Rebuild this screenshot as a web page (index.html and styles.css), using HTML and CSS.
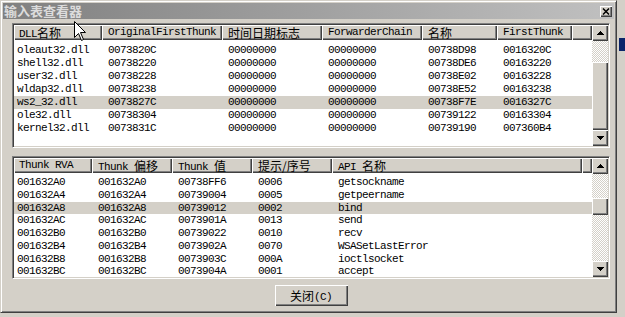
FILE: index.html
```html
<!DOCTYPE html>
<html lang="zh-CN">
<head>
    <meta charset="UTF-8">
    <title>输入表查看器</title>
    <link rel="stylesheet" href="styles.css">
</head>
<body>
    <div class="window">
        <div class="titlebar">
            <span class="title">输入表查看器</span>
            <button class="close-btn"><svg width="8" height="7" viewBox="0 0 8 7"><path d="M1 0.5L7 6.5M7 0.5L1 6.5" stroke="#000" stroke-width="1.5"/></svg></button>
        </div>
        <div class="content">
            <div class="listview dll-list">
                <div class="lv-main">
                    <div class="lv-head">
                        <div class="hcell first">DLL<span class="zh">名称</span></div>
                        <div class="hcell">OriginalFirstThunk</div>
                        <div class="hcell"><span class="zh">时间日期标志</span></div>
                        <div class="hcell">ForwarderChain</div>
                        <div class="hcell"><span class="zh">名称</span></div>
                        <div class="hcell">FirstThunk</div>
                        <div class="hcell"></div>
                    </div>
                    <div class="lv-rows">
                        <div class="row"><span>oleaut32.dll</span><span>0073820C</span><span>00000000</span><span>00000000</span><span>00738D98</span><span>0016320C</span></div>
                        <div class="row"><span>shell32.dll</span><span>00738220</span><span>00000000</span><span>00000000</span><span>00738DE6</span><span>00163220</span></div>
                        <div class="row"><span>user32.dll</span><span>00738228</span><span>00000000</span><span>00000000</span><span>00738E02</span><span>00163228</span></div>
                        <div class="row"><span>wldap32.dll</span><span>00738238</span><span>00000000</span><span>00000000</span><span>00738E52</span><span>00163238</span></div>
                        <div class="row sel"><span>ws2_32.dll</span><span>0073827C</span><span>00000000</span><span>00000000</span><span>00738F7E</span><span>0016327C</span></div>
                        <div class="row"><span>ole32.dll</span><span>00738304</span><span>00000000</span><span>00000000</span><span>00739122</span><span>00163304</span></div>
                        <div class="row"><span>kernel32.dll</span><span>0073831C</span><span>00000000</span><span>00000000</span><span>00739190</span><span>007360B4</span></div>
                    </div>
                </div>
                <div class="vscroll">
                    <div class="sb-btn"><svg width="7" height="4" viewBox="0 0 7 4" shape-rendering="crispEdges"><polygon points="3.5,0 7,4 0,4" fill="#000"/></svg></div>
                    <div class="sb-track" style="height: 21px"></div>
                    <div class="sb-thumb grow"></div>
                    <div class="sb-btn"><svg width="7" height="4" viewBox="0 0 7 4" shape-rendering="crispEdges"><polygon points="0,0 7,0 3.5,4" fill="#000"/></svg></div>
                </div>
            </div>

            <div class="listview api-list">
                <div class="lv-main">
                    <div class="lv-head">
                        <div class="hcell first">Thunk RVA</div>
                        <div class="hcell">Thunk <span class="zh">偏移</span></div>
                        <div class="hcell">Thunk <span class="zh">值</span></div>
                        <div class="hcell"><span class="zh">提示/序号</span></div>
                        <div class="hcell">API <span class="zh">名称</span></div>
                        <div class="hcell"></div>
                    </div>
                    <div class="lv-rows">
                        <div class="row"><span>001632A0</span><span>001632A0</span><span>00738FF6</span><span>0006</span><span>getsockname</span></div>
                        <div class="row"><span>001632A4</span><span>001632A4</span><span>00739004</span><span>0005</span><span>getpeername</span></div>
                        <div class="row sel"><span>001632A8</span><span>001632A8</span><span>00739012</span><span>0002</span><span>bind</span></div>
                        <div class="row"><span>001632AC</span><span>001632AC</span><span>0073901A</span><span>0013</span><span>send</span></div>
                        <div class="row"><span>001632B0</span><span>001632B0</span><span>00739022</span><span>0010</span><span>recv</span></div>
                        <div class="row"><span>001632B4</span><span>001632B4</span><span>0073902A</span><span>0070</span><span>WSASetLastError</span></div>
                        <div class="row"><span>001632B8</span><span>001632B8</span><span>0073903C</span><span>000A</span><span>ioctlsocket</span></div>
                        <div class="row"><span>001632BC</span><span>001632BC</span><span>0073904A</span><span>0001</span><span>accept</span></div>
                    </div>
                </div>
                <div class="vscroll">
                    <div class="sb-btn"><svg width="7" height="4" viewBox="0 0 7 4" shape-rendering="crispEdges"><polygon points="3.5,0 7,4 0,4" fill="#000"/></svg></div>
                    <div class="sb-track" style="height: 24px"></div>
                    <div class="sb-thumb" style="height: 17px"></div>
                    <div class="sb-track grow"></div>
                    <div class="sb-btn"><svg width="7" height="4" viewBox="0 0 7 4" shape-rendering="crispEdges"><polygon points="0,0 7,0 3.5,4" fill="#000"/></svg></div>
                </div>
            </div>

            <div class="footer">
                <button class="btn"><span class="zh">关闭</span>(C)</button>
            </div>
        </div>
    </div>

    <div class="desk-item"></div>

    <svg class="cursor" width="13" height="20" viewBox="0 0 13 20">
        <path d="M0.5 0.5L0.5 16.5L4.5 12.5L7.5 19.5L9.5 18.5L6.5 11.5L11.5 11.5Z" fill="#fff" stroke="#000" stroke-width="1"/>
    </svg>
</body>
</html>
```

FILE: styles.css
```css
body {
    margin: 0;
    height: 317px;
    overflow: hidden;
    position: relative;
    background-color: #d4d0c8;
    font-family: "Liberation Mono", "Noto Sans CJK SC", monospace;
    font-size: 11px;
    color: #000;
}

.zh {
    font-family: "Noto Sans CJK SC", sans-serif;
    font-size: 12px;
    letter-spacing: 0;
    vertical-align: -1px;
}

.window {
    width: 611px;
    height: 307px;
    padding: 2px;
    border: 1px solid;
    border-color: #d4d0c8 #404040 #404040 #d4d0c8;
    box-shadow: inset 1px 1px #fff, inset -1px -1px #808080;
    background-color: #d4d0c8;
    display: flex;
    flex-direction: column;
}

.titlebar {
    height: 16px;
    padding: 0 2px 0 1px;
    display: flex;
    justify-content: space-between;
    align-items: center;
    background: linear-gradient(to right, #808080, #c0c0c0);
}

.title {
    font-family: "Noto Sans CJK SC", sans-serif;
    font-size: 13px;
    font-weight: bold;
    color: #dcdcdc;
    letter-spacing: 0;
    line-height: 16px;
}

.close-btn {
    width: 12px;
    height: 11px;
    padding: 0;
    border: none;
    background-color: #d4d0c8;
    box-shadow: inset 1px 1px #fff, inset -1px -1px #404040, inset -2px -2px #808080;
    display: flex;
    align-items: center;
    justify-content: center;
}

.content {
    flex: 1;
    padding: 4px 4px 4px 9px;
    display: flex;
    flex-direction: column;
}

.listview {
    display: flex;
    padding: 1px;
    border: 1px solid;
    border-color: #808080 #fff #fff #808080;
    box-shadow: inset 1px 1px #404040, inset -1px -1px #d4d0c8;
    background-color: #fff;
    letter-spacing: -0.6px;
}

.dll-list {
    height: 121px;
}

.api-list {
    height: 119px;
    margin-top: 8px;
}

.lv-main {
    flex: 1;
    overflow: hidden;
}

.lv-head,
.row {
    display: grid;
    white-space: nowrap;
}

.dll-list .lv-head {
    grid-template-columns: 88px 120px 100px 100px 75px 75px 1fr;
}

.dll-list .row {
    grid-template-columns: 88px 120px 100px 100px 75px 75px;
}

.api-list .lv-head {
    grid-template-columns: 78px 80px 80px 80px 250px 1fr;
}

.api-list .row {
    grid-template-columns: 78px 80px 80px 80px 250px;
}

.hcell {
    height: 15px;
    line-height: 15px;
    padding-left: 6px;
    overflow: hidden;
    background-color: #d4d0c8;
    box-shadow: inset 1px 1px #fff, inset -1px -1px #404040, inset -2px -2px #808080;
}

.hcell.first {
    padding-left: 5px;
}

.lv-rows {
    padding-top: 4px;
}

.api-list .lv-rows {
    padding-top: 3px;
}

.row {
    height: 13px;
    line-height: 13px;
}

.api-list .row {
    height: 12.75px;
}

.row span {
    padding-left: 6px;
    overflow: hidden;
}

.row span:first-child {
    padding-left: 3px;
}

.row.sel {
    background-color: #d4d0c8;
}

.vscroll {
    width: 16px;
    display: flex;
    flex-direction: column;
}

.sb-btn,
.sb-thumb {
    background-color: #d4d0c8;
    box-shadow: inset 1px 1px #fff, inset -1px -1px #404040, inset -2px -2px #808080;
}

.sb-btn {
    height: 16px;
    flex-shrink: 0;
    display: flex;
    align-items: center;
    justify-content: center;
}

.sb-track {
    background: repeating-conic-gradient(#fff 0 25%, #d4d0c8 0 50%) 0 0 / 2px 2px;
}

.grow {
    flex: 1;
}

.footer {
    margin-top: 6px;
    display: flex;
    justify-content: center;
}

.btn {
    width: 73px;
    height: 21px;
    padding: 0;
    border: none;
    background-color: #d4d0c8;
    box-shadow: inset 1px 1px #fff, inset -1px -1px #404040, inset -2px -2px #808080;
    font-family: "Liberation Mono", "Noto Sans CJK SC", monospace;
    font-size: 11px;
    letter-spacing: -0.6px;
    color: #000;
}

.desk-item {
    position: absolute;
    left: 619px;
    top: 38px;
    width: 6px;
    height: 13px;
    background-color: #0a246a;
}

.cursor {
    position: absolute;
    left: 74px;
    top: 21px;
}
```
